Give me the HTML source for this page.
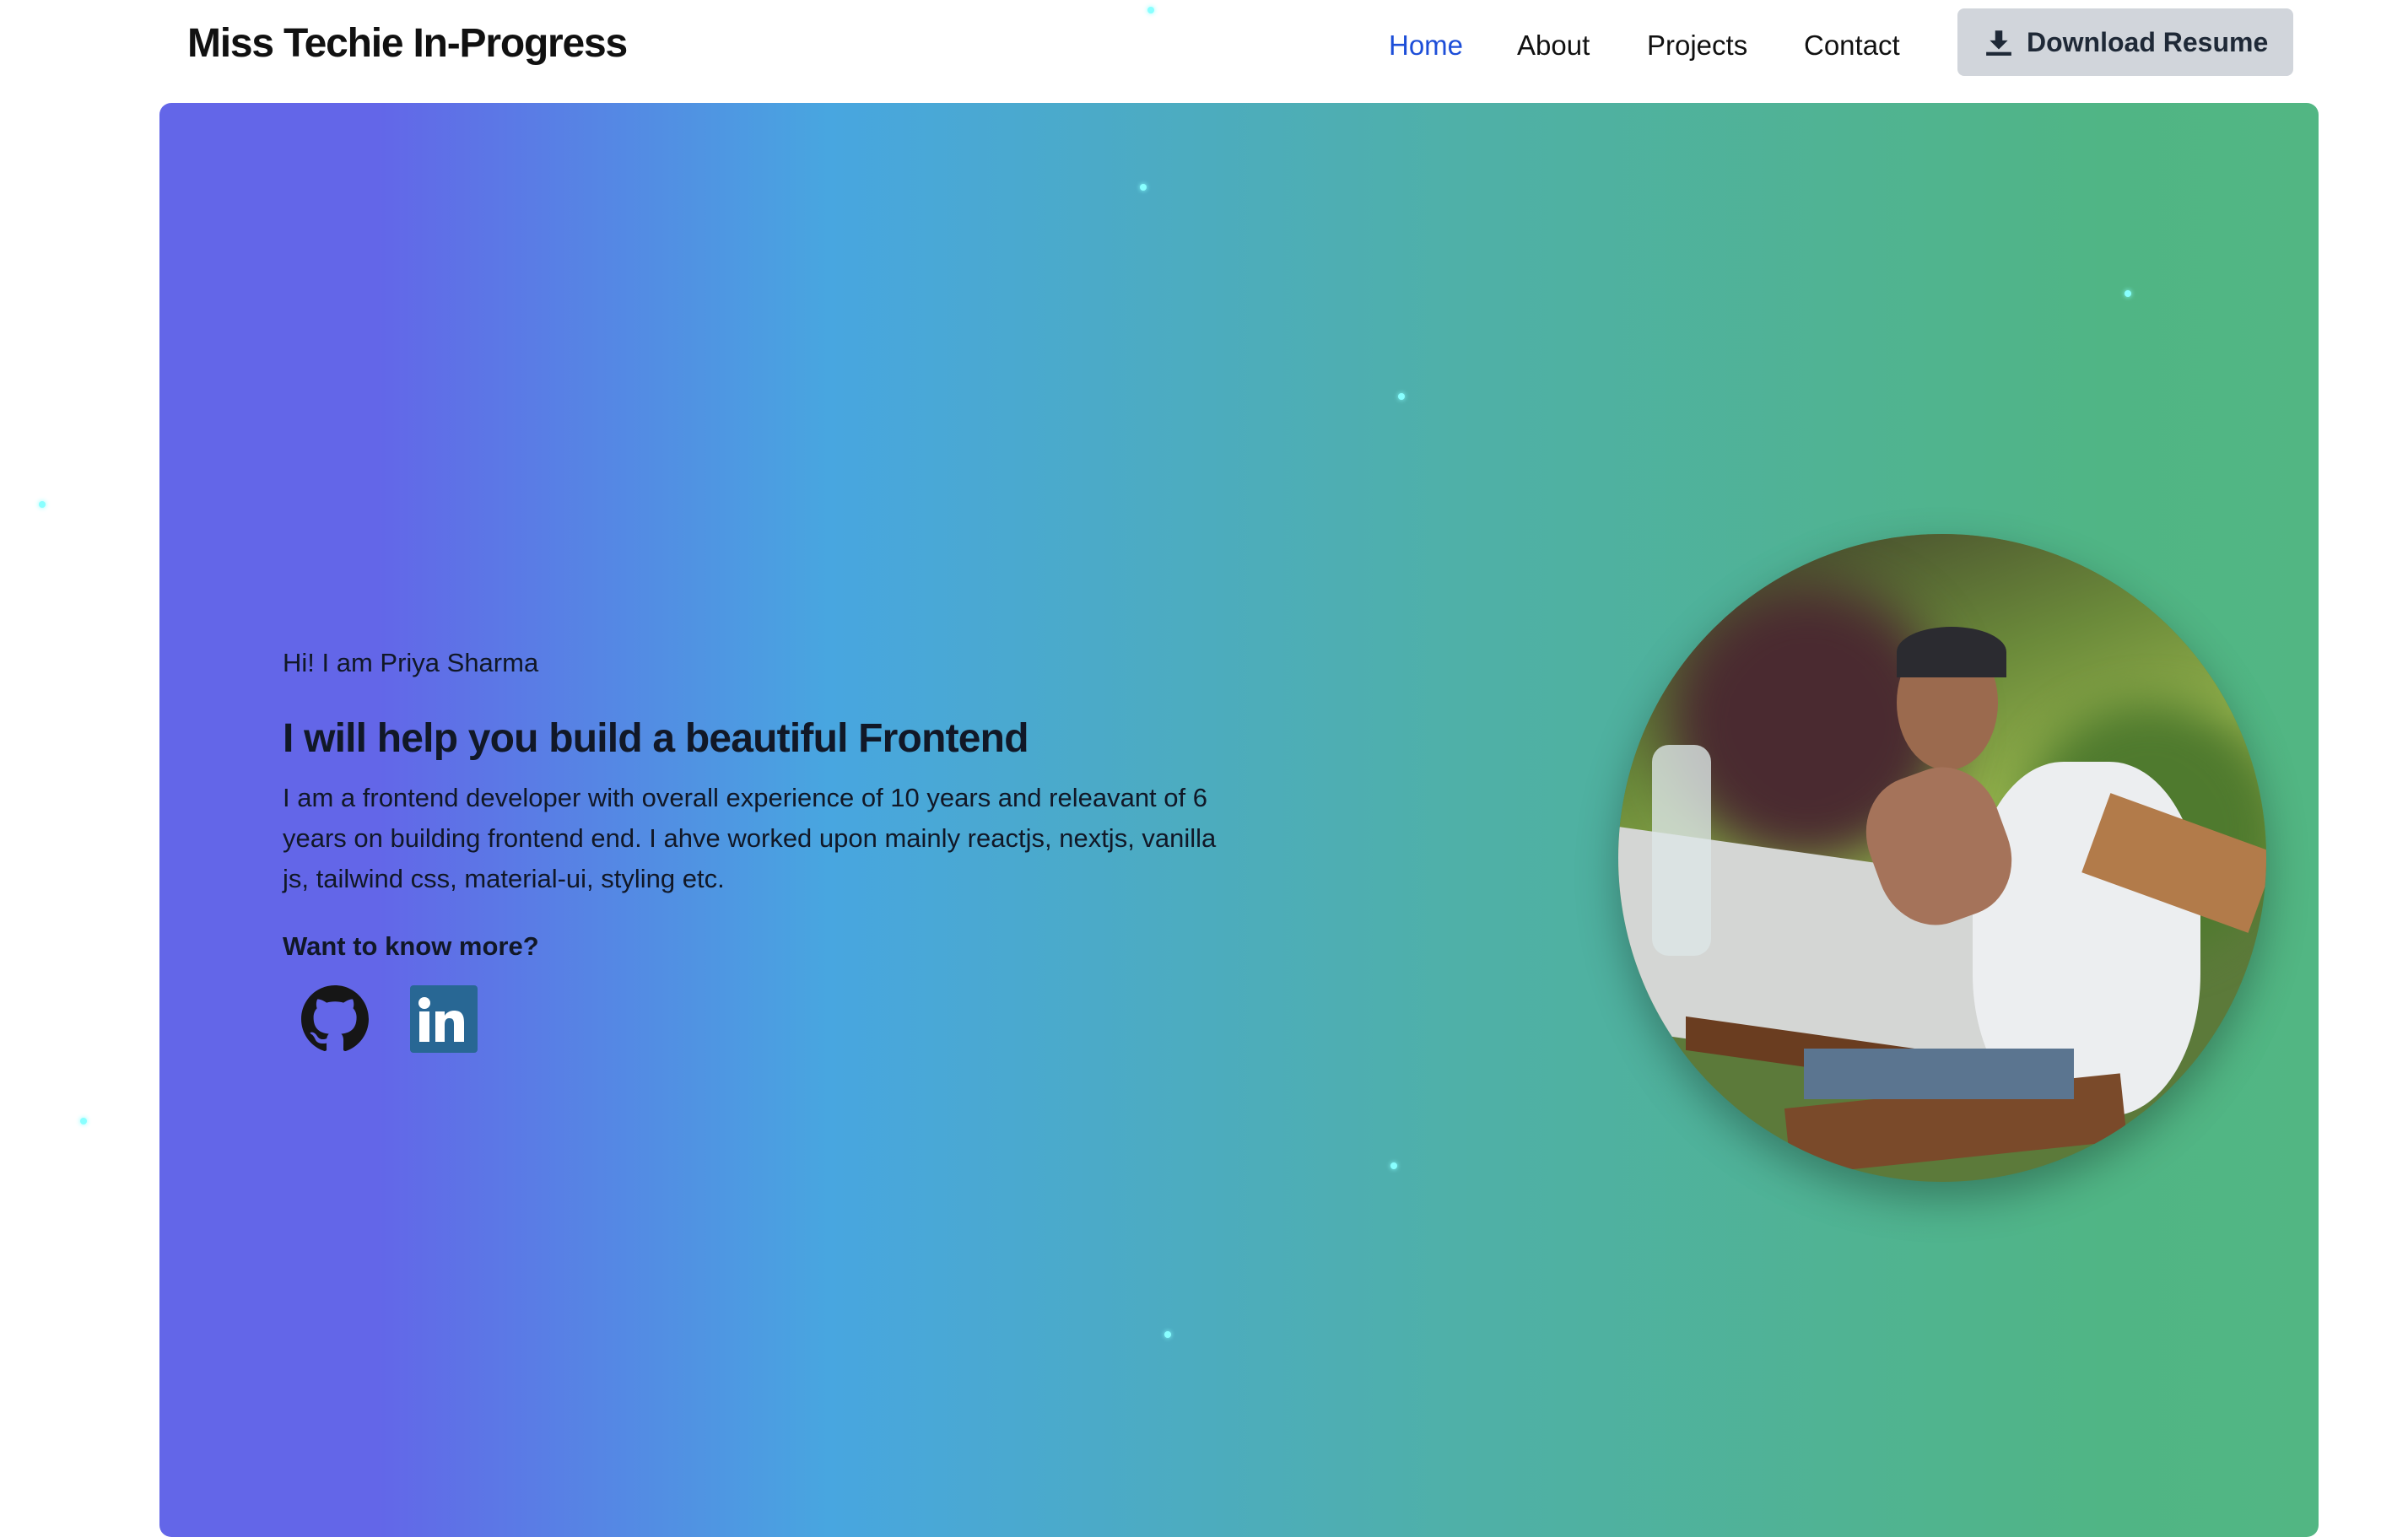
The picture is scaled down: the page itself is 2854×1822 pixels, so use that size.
<!DOCTYPE html>
<html><head><meta charset="utf-8">
<style>
*{margin:0;padding:0;box-sizing:border-box}
html,body{width:2854px;height:1762px;overflow:hidden;background:#fff;font-family:"Liberation Sans",sans-serif;color:#111827}
.title{position:absolute;left:222px;top:24px;font-size:48px;font-weight:bold;letter-spacing:-1.2px;color:#111}
.nav{position:absolute;top:35px;font-size:33px;color:#111}
.btn{position:absolute;left:2320px;top:10px;width:398px;height:80px;background:#d1d5db;border-radius:8px;font-size:32px;font-weight:bold;color:#1f2937;display:flex;align-items:center;padding-left:32px}
.hero{position:absolute;left:189px;top:122px;width:2559px;height:1700px;border-radius:14px;
background:linear-gradient(90deg,#6366e8 0%,#6366e8 10%,#48a6e0 31%,#4fb0a8 60%,#50b585 90%,#52b683 100%)}
.t{position:absolute;left:335px;white-space:nowrap}
.photo{position:absolute;left:1918px;top:633px;width:768px;height:768px;border-radius:50%;overflow:hidden;box-shadow:0 20px 50px rgba(0,0,0,.3);background:#5c7a3a}
.photo div{position:absolute}
.dot{position:absolute;width:8px;height:8px;border-radius:50%;background:#8ff;box-shadow:0 0 6px #8ff}
</style></head><body>
<div class="title">Miss Techie In-Progress</div>
<div class="nav" style="left:1646px;color:#1d4ed8">Home</div>
<div class="nav" style="left:1798px">About</div>
<div class="nav" style="left:1952px">Projects</div>
<div class="nav" style="left:2138px">Contact</div>
<div class="btn"><svg width="34" height="34" viewBox="0 0 32 32" style="margin-right:16px"><path d="M12 3h8v11h6l-10 10-10-10h6z" fill="#1f2937"/><rect x="2" y="27" width="28" height="4" fill="#1f2937"/></svg>Download Resume</div>
<div class="hero"></div>
<div class="dot" style="left:1351px;top:218px"></div>
<div class="dot" style="left:2518px;top:344px"></div>
<div class="dot" style="left:1657px;top:466px"></div>
<div class="dot" style="left:46px;top:594px"></div>
<div class="dot" style="left:95px;top:1325px"></div>
<div class="dot" style="left:1648px;top:1378px"></div>
<div class="dot" style="left:1380px;top:1578px"></div>
<div class="dot" style="left:1360px;top:8px"></div>
<div class="t" style="top:768px;font-size:31px">Hi! I am Priya Sharma</div>
<div class="t" style="top:848px;font-size:48px;font-weight:bold;letter-spacing:-0.8px">I will help you build a beautiful Frontend</div>
<div class="t" style="top:922px;font-size:31px;line-height:48px">I am a frontend developer with overall experience of 10 years and releavant of 6<br>years on building frontend end. I ahve worked upon mainly reactjs, nextjs, vanilla<br>js, tailwind css, material-ui, styling etc.</div>
<div class="t" style="top:1104px;font-size:31px;font-weight:bold">Want to know more?</div>
<svg style="position:absolute;left:357px;top:1168px" width="80" height="80" viewBox="0 0 16 16"><path fill="#161616" d="M8 0C3.58 0 0 3.580 0 8c0 3.54 2.29 6.530 5.47 7.59.4.07.55-.17.55-.38 0-.19-.01-.82-.01-1.49-2.010.37-2.530-.49-2.690-.94-.09-.23-.48-.94-.82-1.13-.28-.15-.68-.52-.01-.53.63-.01 1.080.58 1.230.82.72 1.210 1.870.87 2.330.66.07-.52.28-.87.51-1.07-1.780-.2-3.640-.89-3.640-3.95 0-.87.31-1.590.82-2.150-.08-.2-.36-1.020.08-2.120 0 0 .67-.21 2.200.82.64-.18 1.320-.27 2-.27.68 0 1.360.09 2 .27 1.530-1.040 2.200-.82 2.200-.82.44 1.100.16 1.920.08 2.120.51.56.82 1.270.82 2.150 0 3.070-1.870 3.750-3.650 3.950.29.25.54.73.54 1.480 0 1.070-.01 1.930-.01 2.200 0 .21.15.46.55.38A8.013 8.013 0 0016 8c0-4.420-3.580-8-8-8z"/></svg>
<svg style="position:absolute;left:486px;top:1168px" width="80" height="80" viewBox="0 0 80 80"><rect width="80" height="80" rx="4" fill="#286794"/><circle cx="17" cy="21" r="7" fill="#fff"/><rect x="11" y="31" width="12" height="36" fill="#fff"/><path d="M30 31h11v5c2-3.5 6-6 11-6 9 0 12 5 12 14v23H52V46c0-5-1.5-7-5.5-7S41 42 41 47v20H30z" fill="#fff"/></svg>
<div class="photo">
<div style="left:0;top:0;width:768px;height:400px;background:linear-gradient(160deg,#3c3a2a,#6b8a3a 45%,#8fae4a 70%,#6e8f3a)"></div>
<div style="left:60px;top:60px;width:330px;height:330px;border-radius:50%;background:#4a2a30;filter:blur(30px)"></div>
<div style="left:480px;top:200px;width:300px;height:300px;border-radius:50%;background:#4f7a2e;filter:blur(25px)"></div>
<div style="left:0;top:380px;width:470px;height:240px;background:#d4d6d4;transform:skewY(8deg)"></div>
<div style="left:80px;top:600px;width:400px;height:40px;background:#6a3d20;transform:skewY(8deg)"></div>
<div style="left:420px;top:270px;width:270px;height:420px;border-radius:40%;background:#eceef0"></div>
<div style="left:330px;top:120px;width:120px;height:160px;border-radius:50%;background:#9b6a4e"></div>
<div style="left:330px;top:110px;width:130px;height:60px;border-radius:50% 50% 0 0;background:#2b2b30"></div>
<div style="left:300px;top:280px;width:160px;height:180px;border-radius:40%;background:#a5735a;transform:rotate(-20deg)"></div>
<div style="left:560px;top:340px;width:210px;height:100px;background:#b27b4a;transform:rotate(20deg)"></div>
<div style="left:200px;top:660px;width:400px;height:80px;background:#7a4a2a;transform:rotate(-6deg)"></div>
<div style="left:220px;top:610px;width:320px;height:60px;background:#5b7590"></div>
<div style="left:40px;top:250px;width:70px;height:250px;border-radius:20px;background:rgba(220,230,230,.8)"></div>
</div>
</body></html>
